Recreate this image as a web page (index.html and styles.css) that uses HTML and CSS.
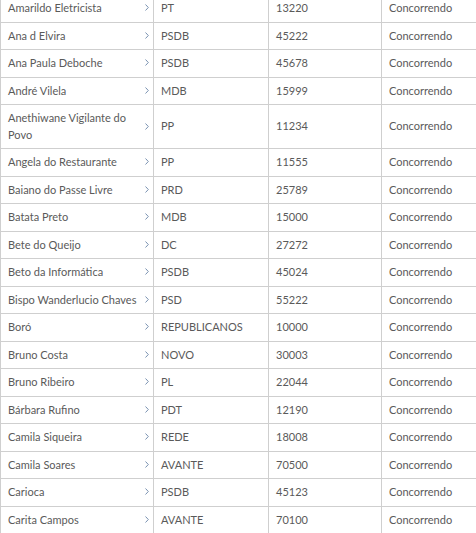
FILE: index.html
```html
<!DOCTYPE html>
<html lang="pt">
<head>
<meta charset="utf-8">
<title>Candidatos</title>
<link rel="stylesheet" href="styles.css">
</head>
<body>
<table class="cands">
  <colgroup>
    <col class="c-name"><col class="c-party"><col class="c-num"><col class="c-status">
  </colgroup>
  <tbody>
    <tr><td class="name"><span>Amarildo Eletricista</span><svg class="chev" viewBox="0 0 4 7"><polyline points="0.5,0.5 3.3,3.5 0.5,6.5"/></svg></td><td>PT</td><td>13220</td><td>Concorrendo</td></tr>
    <tr><td class="name"><span>Ana d Elvira</span><svg class="chev" viewBox="0 0 4 7"><polyline points="0.5,0.5 3.3,3.5 0.5,6.5"/></svg></td><td>PSDB</td><td>45222</td><td>Concorrendo</td></tr>
    <tr><td class="name"><span>Ana Paula Deboche</span><svg class="chev" viewBox="0 0 4 7"><polyline points="0.5,0.5 3.3,3.5 0.5,6.5"/></svg></td><td>PSDB</td><td>45678</td><td>Concorrendo</td></tr>
    <tr><td class="name"><span>André Vilela</span><svg class="chev" viewBox="0 0 4 7"><polyline points="0.5,0.5 3.3,3.5 0.5,6.5"/></svg></td><td>MDB</td><td>15999</td><td>Concorrendo</td></tr>
    <tr><td class="name"><span>Anethiwane Vigilante do Povo</span><svg class="chev" viewBox="0 0 4 7"><polyline points="0.5,0.5 3.3,3.5 0.5,6.5"/></svg></td><td>PP</td><td>11234</td><td>Concorrendo</td></tr>
    <tr><td class="name"><span>Angela do Restaurante</span><svg class="chev" viewBox="0 0 4 7"><polyline points="0.5,0.5 3.3,3.5 0.5,6.5"/></svg></td><td>PP</td><td>11555</td><td>Concorrendo</td></tr>
    <tr><td class="name"><span>Baiano do Passe Livre</span><svg class="chev" viewBox="0 0 4 7"><polyline points="0.5,0.5 3.3,3.5 0.5,6.5"/></svg></td><td>PRD</td><td>25789</td><td>Concorrendo</td></tr>
    <tr><td class="name"><span>Batata Preto</span><svg class="chev" viewBox="0 0 4 7"><polyline points="0.5,0.5 3.3,3.5 0.5,6.5"/></svg></td><td>MDB</td><td>15000</td><td>Concorrendo</td></tr>
    <tr><td class="name"><span>Bete do Queijo</span><svg class="chev" viewBox="0 0 4 7"><polyline points="0.5,0.5 3.3,3.5 0.5,6.5"/></svg></td><td>DC</td><td>27272</td><td>Concorrendo</td></tr>
    <tr><td class="name"><span>Beto da Informática</span><svg class="chev" viewBox="0 0 4 7"><polyline points="0.5,0.5 3.3,3.5 0.5,6.5"/></svg></td><td>PSDB</td><td>45024</td><td>Concorrendo</td></tr>
    <tr><td class="name"><span>Bispo Wanderlucio Chaves</span><svg class="chev" viewBox="0 0 4 7"><polyline points="0.5,0.5 3.3,3.5 0.5,6.5"/></svg></td><td>PSD</td><td>55222</td><td>Concorrendo</td></tr>
    <tr><td class="name"><span>Boró</span><svg class="chev" viewBox="0 0 4 7"><polyline points="0.5,0.5 3.3,3.5 0.5,6.5"/></svg></td><td>REPUBLICANOS</td><td>10000</td><td>Concorrendo</td></tr>
    <tr><td class="name"><span>Bruno Costa</span><svg class="chev" viewBox="0 0 4 7"><polyline points="0.5,0.5 3.3,3.5 0.5,6.5"/></svg></td><td>NOVO</td><td>30003</td><td>Concorrendo</td></tr>
    <tr><td class="name"><span>Bruno Ribeiro</span><svg class="chev" viewBox="0 0 4 7"><polyline points="0.5,0.5 3.3,3.5 0.5,6.5"/></svg></td><td>PL</td><td>22044</td><td>Concorrendo</td></tr>
    <tr><td class="name"><span>Bárbara Rufino</span><svg class="chev" viewBox="0 0 4 7"><polyline points="0.5,0.5 3.3,3.5 0.5,6.5"/></svg></td><td>PDT</td><td>12190</td><td>Concorrendo</td></tr>
    <tr><td class="name"><span>Camila Siqueira</span><svg class="chev" viewBox="0 0 4 7"><polyline points="0.5,0.5 3.3,3.5 0.5,6.5"/></svg></td><td>REDE</td><td>18008</td><td>Concorrendo</td></tr>
    <tr><td class="name"><span>Camila Soares</span><svg class="chev" viewBox="0 0 4 7"><polyline points="0.5,0.5 3.3,3.5 0.5,6.5"/></svg></td><td>AVANTE</td><td>70500</td><td>Concorrendo</td></tr>
    <tr><td class="name"><span>Carioca</span><svg class="chev" viewBox="0 0 4 7"><polyline points="0.5,0.5 3.3,3.5 0.5,6.5"/></svg></td><td>PSDB</td><td>45123</td><td>Concorrendo</td></tr>
    <tr><td class="name"><span>Carita Campos</span><svg class="chev" viewBox="0 0 4 7"><polyline points="0.5,0.5 3.3,3.5 0.5,6.5"/></svg></td><td>AVANTE</td><td>70100</td><td>Concorrendo</td></tr>
  </tbody>
</table>
</body>
</html>
```
FILE: styles.css
```css
html, body {
  margin: 0;
  padding: 0;
  background: #fff;
  overflow: hidden;
}
body {
  font-family: Lato, "Open Sans", sans-serif;
  font-size: 11px;
  color: #5a5a5a;
}
.cands {
  border-collapse: collapse;
  table-layout: fixed;
  width: 500px;
  margin-top: -6px;
}
.c-name { width: 153px; }
.c-party { width: 115px; }
.c-num { width: 113px; }
.c-status { width: 119px; }
.cands td {
  border: 1px solid #cfcfcf;
  padding: 5px 6px 5px 7px;
  line-height: 16.5px;
  vertical-align: middle;
}
.name {
  position: relative;
}
.name span {
  display: block;
  padding-right: 8px;
}
.chev {
  position: absolute;
  right: 4px;
  top: 50%;
  width: 4px;
  height: 7px;
  margin-top: -4px;
  fill: none;
  stroke: #7891b0;
  stroke-width: 1;
}
```
